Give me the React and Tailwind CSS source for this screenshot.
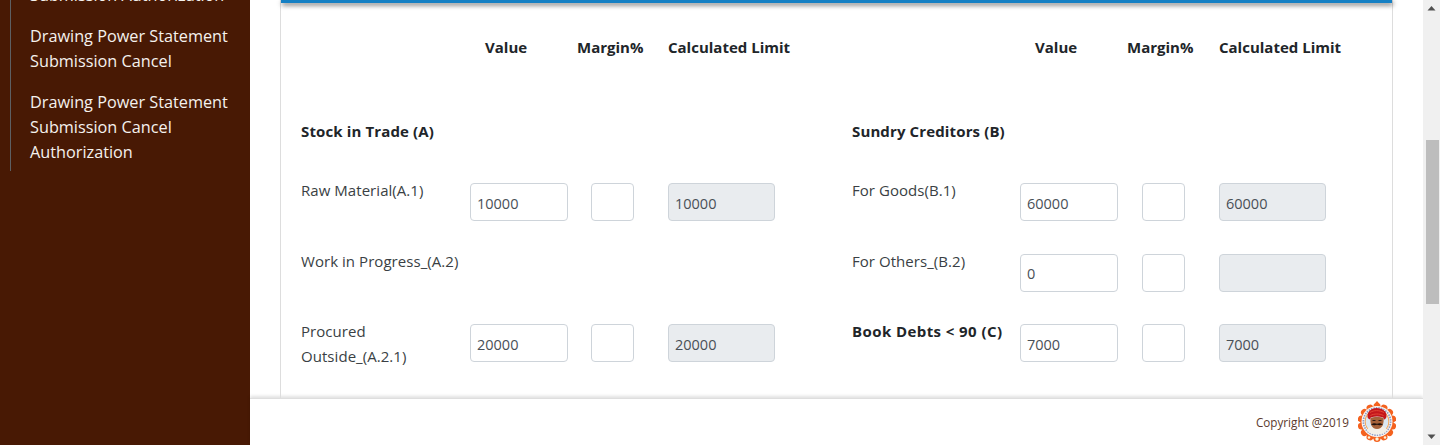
import React from 'react';

function Field({ value, className = '', disabled = false }) {
  return (
    <input
      readOnly
      value={value}
      className={`h-[38px] rounded-[4px] border border-[#ced4da] px-[6px] pt-[2px] text-[14.5px] text-[#495057] outline-none ${disabled ? 'bg-[#e9ecef]' : 'bg-white'} ${className}`}
    />
  );
}

function Row({ label, bold, value, limit, columns, hideInputs }) {
  return (
    <div className={`grid h-[70.5px] ${columns}`}>
      <div className={`pr-2 pt-[7px] leading-[25px] ${bold ? 'font-bold tracking-[0.42px] text-[#212529]' : 'tracking-[0.05px] text-[#3a3f44]'}`}>{label}</div>
      {!hideInputs && (
        <>
          <div className="pt-[12px]"><Field value={value} className="w-[98px]" /></div>
          <div className="pt-[12px]"><Field value="" className="w-[43px]" /></div>
          <div className="pt-[12px]"><Field value={limit} disabled className="w-[107px]" /></div>
        </>
      )}
    </div>
  );
}

function Half({ title, rows, columns, width, marginClass }) {
  return (
    <div className={width}>
      <div className={`grid h-[119px] pt-[35px] font-bold leading-[25px] text-[#212529] ${columns}`}>
        <div />
        <div className="pl-[15px]">Value</div>
        <div className={marginClass}>Margin%</div>
        <div className="whitespace-nowrap">Calculated Limit</div>
      </div>
      <div className="h-[52px] font-bold leading-[25px] tracking-[0.13px] text-[#212529]">{title}</div>
      {rows.map((row) => (
        <Row key={row.label} {...row} columns={columns} />
      ))}
    </div>
  );
}

function Logo() {
  const scallops = Array.from({ length: 14 }, (_, i) => (i * 360) / 14);
  return (
    <svg width="38" height="42" viewBox="0 0 38 42" className="shrink-0">
      {/* orange badge with a peak on top */}
      {scallops.map((a) => (
        <circle key={a} cx="19" cy="5.500" r="3.500" fill="#f4621f" transform={`rotate(${a} 19 21.500)`} />
      ))}
      <circle cx="19" cy="21.500" r="16.500" fill="#f4621f" />
      <path d="M15.500 4 19 0l3.500 4z" fill="#f4621f" />
      {/* ring with the lettering */}
      <circle cx="19" cy="20.500" r="15.500" fill="#fdf6ef" />
      <circle cx="19" cy="20.500" r="13.600" fill="none" stroke="#8c9cc6" strokeWidth="1.800" strokeDasharray="1.500 1" />
      <circle cx="19" cy="20.500" r="12.200" fill="#f79a3e" />
      <circle cx="19" cy="20.500" r="11.400" fill="#dbe8f2" />
      {/* clothes */}
      <path d="M8.500 29c2-3 6-4.500 10.500-4.500s8.500 1.500 10.500 4.500c-2 3-6 4.500-10.500 4.500S10.500 32 8.500 29z" fill="#f3efe6" />
      {/* face */}
      <path d="M12.500 17c2-1.500 11-1.500 13 0 .6 5-.8 11-6.500 11s-7.100-6-6.500-11z" fill="#a5623a" />
      <path d="M13 23.500c2.500-1.800 4.300-1.500 6-.7 1.700-.8 3.500-1.100 6 .7-2 .8-4.500.8-6 .2-1.500.6-4 .6-6-.2z" fill="#1f120d" />
      <path d="M14.500 19.500h3M20.500 19.500h3" stroke="#2a1a14" strokeWidth="1" />
      {/* turban */}
      <path d="M9.500 16C9 11 13 7 18.500 7c6 0 10.500 3.500 10 8.500-.2 1.500-1 2.500-2.500 3.200-.2-1-.4-1.800-.8-2.300-4-1.200-8.400-1.200-12.400 0-.4.500-.7 1.200-.8 2-1.300-.5-2.300-1.300-2.500-2.400z" fill="#c4161c" />
      <path d="M12 11.500c4-2.500 9-2.500 14 0M12.500 14.500c3.500-2 9-2 13 0" stroke="#e8503a" strokeWidth="0.800" fill="none" />
      {/* bottom petals */}
      <circle cx="11" cy="36.500" r="1.300" fill="#fff3d6" />
      <circle cx="27" cy="36.500" r="1.300" fill="#fff3d6" />
      <circle cx="19" cy="38" r="1.700" fill="#fff3d6" />
    </svg>
  );
}

export default function App() {
  const leftColumns = 'grid-cols-[169px_121px_77px_107px]';
  const rightColumns = 'grid-cols-[168px_122px_77px_107px]';

  const leftRows = [
    { label: 'Raw Material(A.1)', value: '10000', limit: '10000' },
    { label: 'Work in Progress_(A.2)', hideInputs: true },
    { label: 'Procured Outside_(A.2.1)', value: '20000', limit: '20000' },
  ];
  const rightRows = [
    { label: 'For Goods(B.1)', value: '60000', limit: '60000' },
    { label: 'For Others_(B.2)', value: '0', limit: '' },
    { label: 'Book Debts < 90 (C)', bold: true, value: '7000', limit: '7000' },
  ];

  return (
    <div className="flex h-[445px] w-[1440px] overflow-hidden bg-white font-['Open_Sans','Noto_Sans',sans-serif] text-[15px] text-[#212529]">
      {/* Sidebar */}
      <aside className="w-[250px] shrink-0 bg-[#481904] pl-[10px]">
        <ul className="-mt-[17px] border-l border-[#5d5f63] pb-[6px] pl-[19px] text-[16.25px] leading-[25px] text-[#f5f1ee]">
          <li className="mb-[16px]">Submission Authorization</li>
          <li className="mb-[16px]">Drawing Power Statement<br />Submission Cancel</li>
          <li>Drawing Power Statement<br />Submission Cancel<br />Authorization</li>
        </ul>
      </aside>

      {/* Main */}
      <div className="flex min-w-0 flex-1 flex-col">
        <div className="relative flex-1 overflow-hidden pl-[30px] pr-[30px]">
          <div className="h-full border-x border-[#dddddd] pl-[20px]">
            <div className="flex">
              <Half width="w-[551px]" columns={leftColumns} marginClass="-ml-[14px]" title="Stock in Trade (A)" rows={leftRows} />
              <Half width="w-[474px]" columns={rightColumns} marginClass="-ml-[15px]" title="Sundry Creditors (B)" rows={rightRows} />
            </div>
          </div>
          <div className="absolute left-[31px] top-0 h-[3px] w-[1111px] bg-[#1580c4] shadow-[1px_2px_5px_rgba(0,0,0,0.65)]" />
        </div>

        <footer className="flex h-[47px] shrink-0 items-center justify-end border-t border-[#dedede] bg-white pr-[27px] shadow-[0_-2px_3px_rgba(0,0,0,0.12)]">
          <span className="mr-[9px] mt-[2px] text-[11.7px] text-[#5b3a2c]">Copyright @2019</span>
          <Logo />
        </footer>
      </div>

      {/* Scrollbar */}
      <div className="relative flex w-[17px] shrink-0 flex-col items-center bg-[#f0f0f0]">
        <svg width="17" height="17" viewBox="0 0 17 17" className="shrink-0"><path d="M4.500 10.500 8.500 6l4 4.500z" fill="#505050" /></svg>
        <div className="ml-[2px] mt-[123px] h-[164px] w-[13px] bg-[#bdbdbd]" />
        <svg width="17" height="17" viewBox="0 0 17 17" className="absolute bottom-0 left-0"><path d="M4.500 6.500 8.500 11l4-4.500z" fill="#505050" /></svg>
      </div>
    </div>
  );
}
